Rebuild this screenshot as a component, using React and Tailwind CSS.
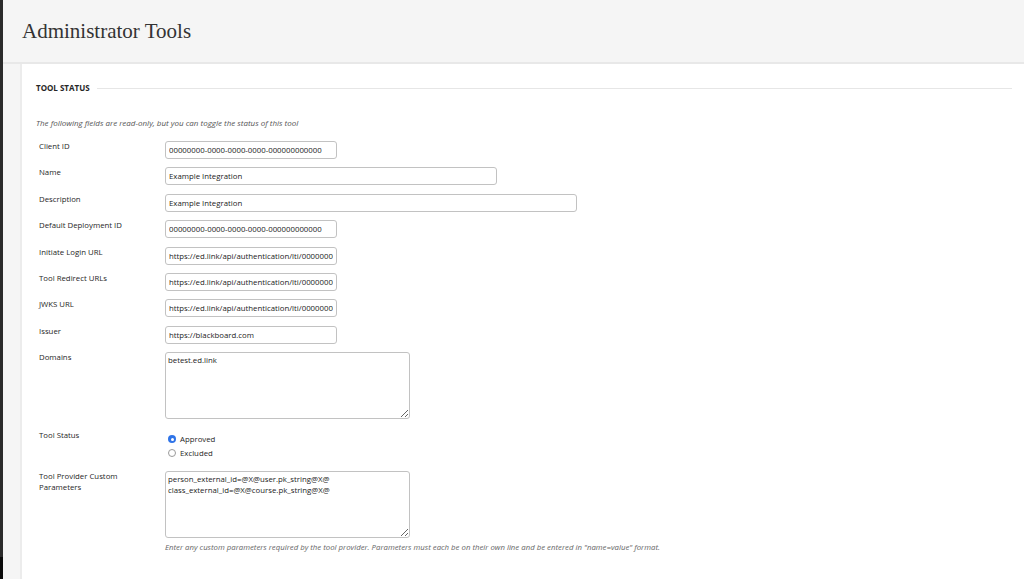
import React from "react";

const inputCls =
  "block h-[18px] rounded-[3px] border border-[#c2c2c2] bg-white px-[3px] text-[7.8px] text-[#222] outline-none [font-family:'Open_Sans',sans-serif]";

const areaCls =
  "block h-[67px] w-[245px] rounded-[3px] border border-[#c2c2c2] bg-white px-[2px] py-[2px] text-[7.8px] leading-[10.5px] text-[#222] outline-none [font-family:'Open_Sans',sans-serif]";

function Row({ label, children }) {
  return (
    <div className="flex">
      <div className="w-[129px] shrink-0 pl-[3px] pr-[18px] text-[7.8px] leading-[11px] text-[#262626]">{label}</div>
      <div className="leading-none">{children}</div>
    </div>
  );
}

function Radio({ checked, label }) {
  return (
    <div className="flex h-[14px] items-center gap-[4px]">
      {checked ? (
        <span className="ml-[3px] flex h-[8px] w-[8px] items-center justify-center rounded-full bg-[#2f74e8]">
          <span className="h-[3px] w-[3px] rounded-full bg-white" />
        </span>
      ) : (
        <span className="ml-[3px] h-[8px] w-[8px] rounded-full border border-[#9a9a9a] bg-white" />
      )}
      <span className="text-[7.8px] leading-[11px] text-[#262626]">{label}</span>
    </div>
  );
}

export default function App() {
  const url = "https://ed.link/api/authentication/lti/00000000";
  const zeros = "00000000-0000-0000-0000-000000000000";
  return (
    <div className="flex h-[579px] w-[1024px] overflow-hidden [font-family:'Open_Sans',sans-serif]">
      <div className="flex w-[3px] shrink-0 flex-col">
        <div className="flex-1 bg-[#2b2b2b]" />
        <div className="h-[22px] bg-[#0a0a0a]" />
      </div>
      <div className="flex flex-1 flex-col bg-[#f5f5f5]">
        <div className="flex h-[64px] shrink-0 items-center border-b-2 border-[#e8e8e8] pl-[19px] pt-[2px]">
          <h1 className="text-[21px] text-[#333] [font-family:'Liberation_Serif',serif]">Administrator Tools</h1>
        </div>
        <div className="flex flex-1">
          <div className="w-[17px] shrink-0" />
          <div className="flex-1 border-l-2 border-[#ececec] bg-white pl-[14px] pr-[12px] pt-[18px]">
            <div className="flex items-center">
              <span className="text-[8px] font-bold leading-[12px] text-[#262626]">TOOL STATUS</span>
              <div className="ml-[7px] h-px flex-1 bg-[#e6e6e6]" />
            </div>
            <p className="mt-[24px] text-[8px] italic leading-[10px] text-[#555]">
              The following fields are read-only, but you can toggle the status of this tool
            </p>
            <div className="mt-[13px] flex flex-col gap-[8.4px]">
              <Row label="Client ID">
                <input readOnly value={zeros} className={inputCls + " w-[172px]"} />
              </Row>
              <Row label="Name">
                <input readOnly value="Example Integration" className={inputCls + " w-[332px]"} />
              </Row>
              <Row label="Description">
                <input readOnly value="Example Integration" className={inputCls + " w-[412px]"} />
              </Row>
              <Row label="Default Deployment ID">
                <input readOnly value={zeros} className={inputCls + " w-[172px]"} />
              </Row>
              <Row label="Initiate Login URL">
                <input readOnly value={url} className={inputCls + " w-[172px]"} />
              </Row>
              <Row label="Tool Redirect URLs">
                <input readOnly value={url} className={inputCls + " w-[172px]"} />
              </Row>
              <Row label="JWKS URL">
                <input readOnly value={url} className={inputCls + " w-[172px]"} />
              </Row>
              <Row label="Issuer">
                <input readOnly value="https://blackboard.com" className={inputCls + " w-[172px]"} />
              </Row>
              <Row label="Domains">
                <textarea readOnly value="betest.ed.link" className={areaCls} />
              </Row>
            </div>
            <div className="mt-[11px]">
              <Row label="Tool Status">
                <div className="pt-[2px]">
                  <Radio checked label="Approved" />
                  <Radio label="Excluded" />
                </div>
              </Row>
            </div>
            <div className="mt-[11px]">
              <Row label="Tool Provider Custom Parameters">
                <textarea
                  readOnly
                  value={"person_external_id=@X@user.pk_string@X@\nclass_external_id=@X@course.pk_string@X@"}
                  className={areaCls}
                />
                <p className="mt-[4px] text-[7.8px] italic leading-[10px] text-[#666]">
                  Enter any custom parameters required by the tool provider. Parameters must each be on their own line and be entered in "name=value" format.
                </p>
              </Row>
            </div>
          </div>
        </div>
      </div>
    </div>
  );
}
